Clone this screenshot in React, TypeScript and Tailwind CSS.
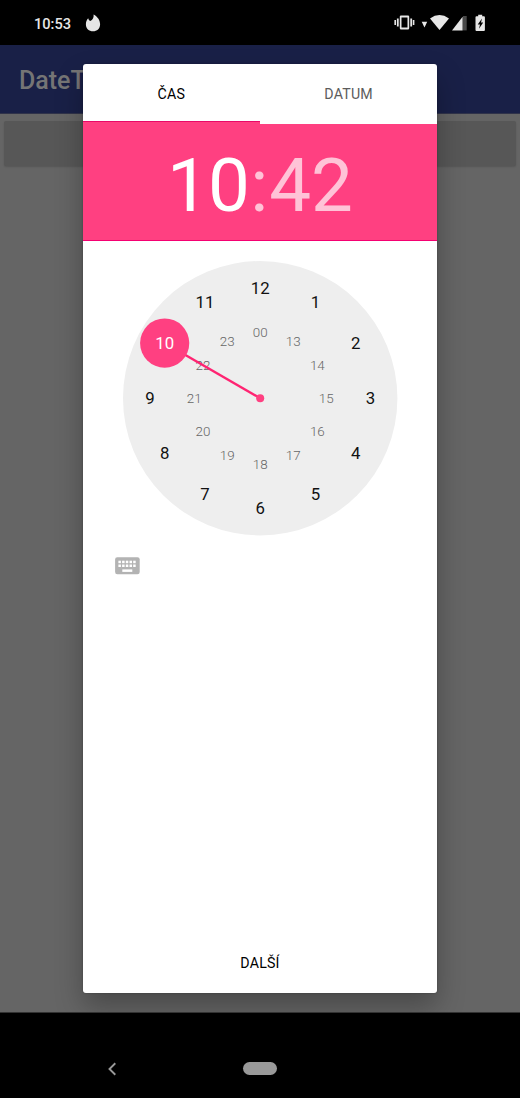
const DIAL_CENTER = 137.2;

const outerHours = ["12", "1", "2", "3", "4", "5", "6", "7", "8", "9", "10", "11"];
const innerHours = ["00", "13", "14", "15", "16", "17", "18", "19", "20", "21", "22", "23"];

function place(index: number, radius: number) {
  const angle = (index * Math.PI) / 6;
  return {
    x: DIAL_CENTER + radius * Math.sin(angle),
    y: DIAL_CENTER - radius * Math.cos(angle),
  };
}

function StatusBar() {
  return (
    <div className="flex h-[45px] shrink-0 items-center bg-black pl-[34px] pr-[34px] text-[#e6e6e6]">
      <span className="pt-[3px] text-[14.6px] font-medium leading-none">10:53</span>
      <svg className="ml-[14px] h-[18px] w-[16px]" viewBox="0 0 16 18" fill="#e6e6e6">
        <path d="M8.600 .4C12.400 2.600 15.100 5.800 15.100 10.200C15.100 14.600 12 17.200 8 17.200C4 17.200 .9 14.500 .9 10.400C.9 7.900 1.700 6 3.200 4.300C3.600 5.700 4.200 6.600 5.200 6.900C7.800 5.800 8.900 3.400 8.600 .4Z" />
      </svg>
      <div className="ml-auto flex items-center">
        <svg className="h-[18px] w-[92px]" viewBox="394 13.600 92 18" fill="#e6e6e6">
          <path fillRule="evenodd" d="M401 15h7a1.2 1.2 0 0 1 1.2 1.2v11.6a1.2 1.2 0 0 1-1.2 1.2h-7a1.2 1.2 0 0 1-1.2-1.2V16.2a1.2 1.2 0 0 1 1.2-1.2zM401.500 17v10.2h6V17z" />
          <path d="M394.400 19.700h1.600v5h-1.600zM396.900 18h1.800v8.2h-1.800zM410.300 18h1.800v8.200h-1.800zM412.800 19.700h1.600V24.700h-1.600z" />
          <path d="M421.700 21.400h5.500l-2.700 5.800z" />
          <path d="M430 18.100Q439.500 11.300 449 18.100L439.500 29.700z" />
          <path d="M462.600 16.300V30H452z" />
          <path fill="#494949" d="M463 15.600h3.700V30H463z" />
          <path fillRule="evenodd" d="M478.200 14.300h4v1.600h1.700a1 1 0 0 1 1 1v12.800a1 1 0 0 1-1 1h-7.400a1 1 0 0 1-1-1V16.900a1 1 0 0 1 1-1h1.700zM482 18.200L477.700 24H480L479 28.300L483.200 22.200H481z" />
        </svg>
      </div>
    </div>
  );
}

function Dial() {
  const selected = place(10, 110.3);
  return (
    <svg className="ml-[40px] mt-[20px] block h-[275px] w-[275px] shrink-0" viewBox="0 0 275 275" textAnchor="middle">
      <circle cx={DIAL_CENTER} cy={DIAL_CENTER} r="137.200" fill="#eeeeee" />
      <g fill="#666666" fontSize="13.400" fontWeight="300">
        {innerHours.map((hour, i) => {
          const p = place(i, 66);
          return <text key={hour} x={p.x} y={p.y + 4.800}>{hour}</text>;
        })}
      </g>
      <line x1={DIAL_CENTER} y1={DIAL_CENTER} x2={selected.x} y2={selected.y} stroke="#ff2472" strokeWidth="2.400" />
      <circle cx={DIAL_CENTER} cy={DIAL_CENTER} r="4" fill="#ff4081" />
      <circle cx={selected.x} cy={selected.y} r="24.600" fill="#ff4081" />
      <g fontSize="16.800">
        {outerHours.map((hour, i) => {
          const p = place(i, 110.3);
          return (
            <text key={hour} x={p.x} y={p.y + 5.800} fill={hour === "10" ? "#ffffff" : "#111111"}>
              {hour}
            </text>
          );
        })}
      </g>
    </svg>
  );
}

function KeyboardIcon() {
  const keys = [3.4, 7.1, 10.8, 14.5, 18.2];
  return (
    <svg className="ml-[32px] mt-[21px] h-[18px] w-[26px] shrink-0" viewBox="0 0 26 18">
      <rect x=".1" y=".2" width="24.600" height="17" rx="2.200" fill="#b3b3b3" />
      <g fill="#ffffff">
        {keys.map((x) => (
          <g key={x}>
            <rect x={x} y="3.700" width="2.500" height="2.500" />
            <rect x={x} y="7.500" width="2.500" height="2.500" />
          </g>
        ))}
        <rect x="7.300" y="12.400" width="10" height="2.500" />
      </g>
    </svg>
  );
}

function Dialog() {
  return (
    <div className="flex h-[929px] w-[354.600px] flex-col overflow-hidden rounded-[3px] bg-white">
      <div className="flex h-[60px] shrink-0 text-[14.200px] tracking-[0.2px]">
        <div className="flex flex-1 flex-col">
          <div className="flex h-[57px] items-center justify-center pt-[4px] text-black">ČAS</div>
          <div className="h-[3px] border-t border-[#e90a69] bg-[#ff4081]" />
        </div>
        <div className="flex flex-1 items-center justify-center pt-px text-[#5c5c5c]">DATUM</div>
      </div>
      <div className="flex h-[117px] shrink-0 items-center justify-center border-b border-[#f50072] bg-[#ff4081] pt-[8px] text-[74.500px] leading-none text-white">
        <span className="tracking-[-0.800px]">10</span>
        <span className="w-[20px] text-center text-[#ffc3d7]">:</span>
        <span className="text-[#ffc3d7]">42</span>
      </div>
      <Dial />
      <KeyboardIcon />
      <div className="mt-auto flex h-[58px] items-center justify-center text-[14.200px] tracking-[0.200px] text-black">DALŠÍ</div>
    </div>
  );
}

export default function App() {
  return (
    <div className="relative flex h-[1098px] w-[520px] flex-col overflow-hidden bg-black font-['Roboto','Noto_Sans',sans-serif]">
      <StatusBar />
      <div className="relative flex flex-1 flex-col overflow-hidden bg-[#656565]">
        <div className="flex h-[69px] shrink-0 items-center border-b border-[#30334a] bg-[#192047] pl-[19px] pt-[4px] text-[25px] font-medium text-[#757575]">
          DateT
        </div>
        <div className="mx-[4px] mt-[7px] h-[45px] shrink-0 rounded-[2px] bg-[#575757] shadow-[0_1px_2px_rgba(0,0,0,0.15)]" />
        <div className="absolute left-[82.700px] top-[19px] h-[929px] w-[354.600px] rounded-[3px] shadow-[0_14px_28px_rgba(0,0,0,0.28),0_0_2px_rgba(0,0,0,0.3)]">
          <Dialog />
        </div>
      </div>
      <div className="grid h-[86px] shrink-0 grid-cols-[225px_70px_225px] items-center border-t border-[#333333] bg-black pt-[26px]">
        <svg className="ml-[107px] h-[14px] w-[10px]" viewBox="0 0 10 14" fill="none" stroke="#999999" strokeWidth="1.900">
          <path d="M8.300 1.300L2.500 7L8.300 12.700" />
        </svg>
        <div className="mx-auto h-[12.500px] w-[34.500px] rounded-full bg-[#999999]" />
      </div>
    </div>
  );
}
